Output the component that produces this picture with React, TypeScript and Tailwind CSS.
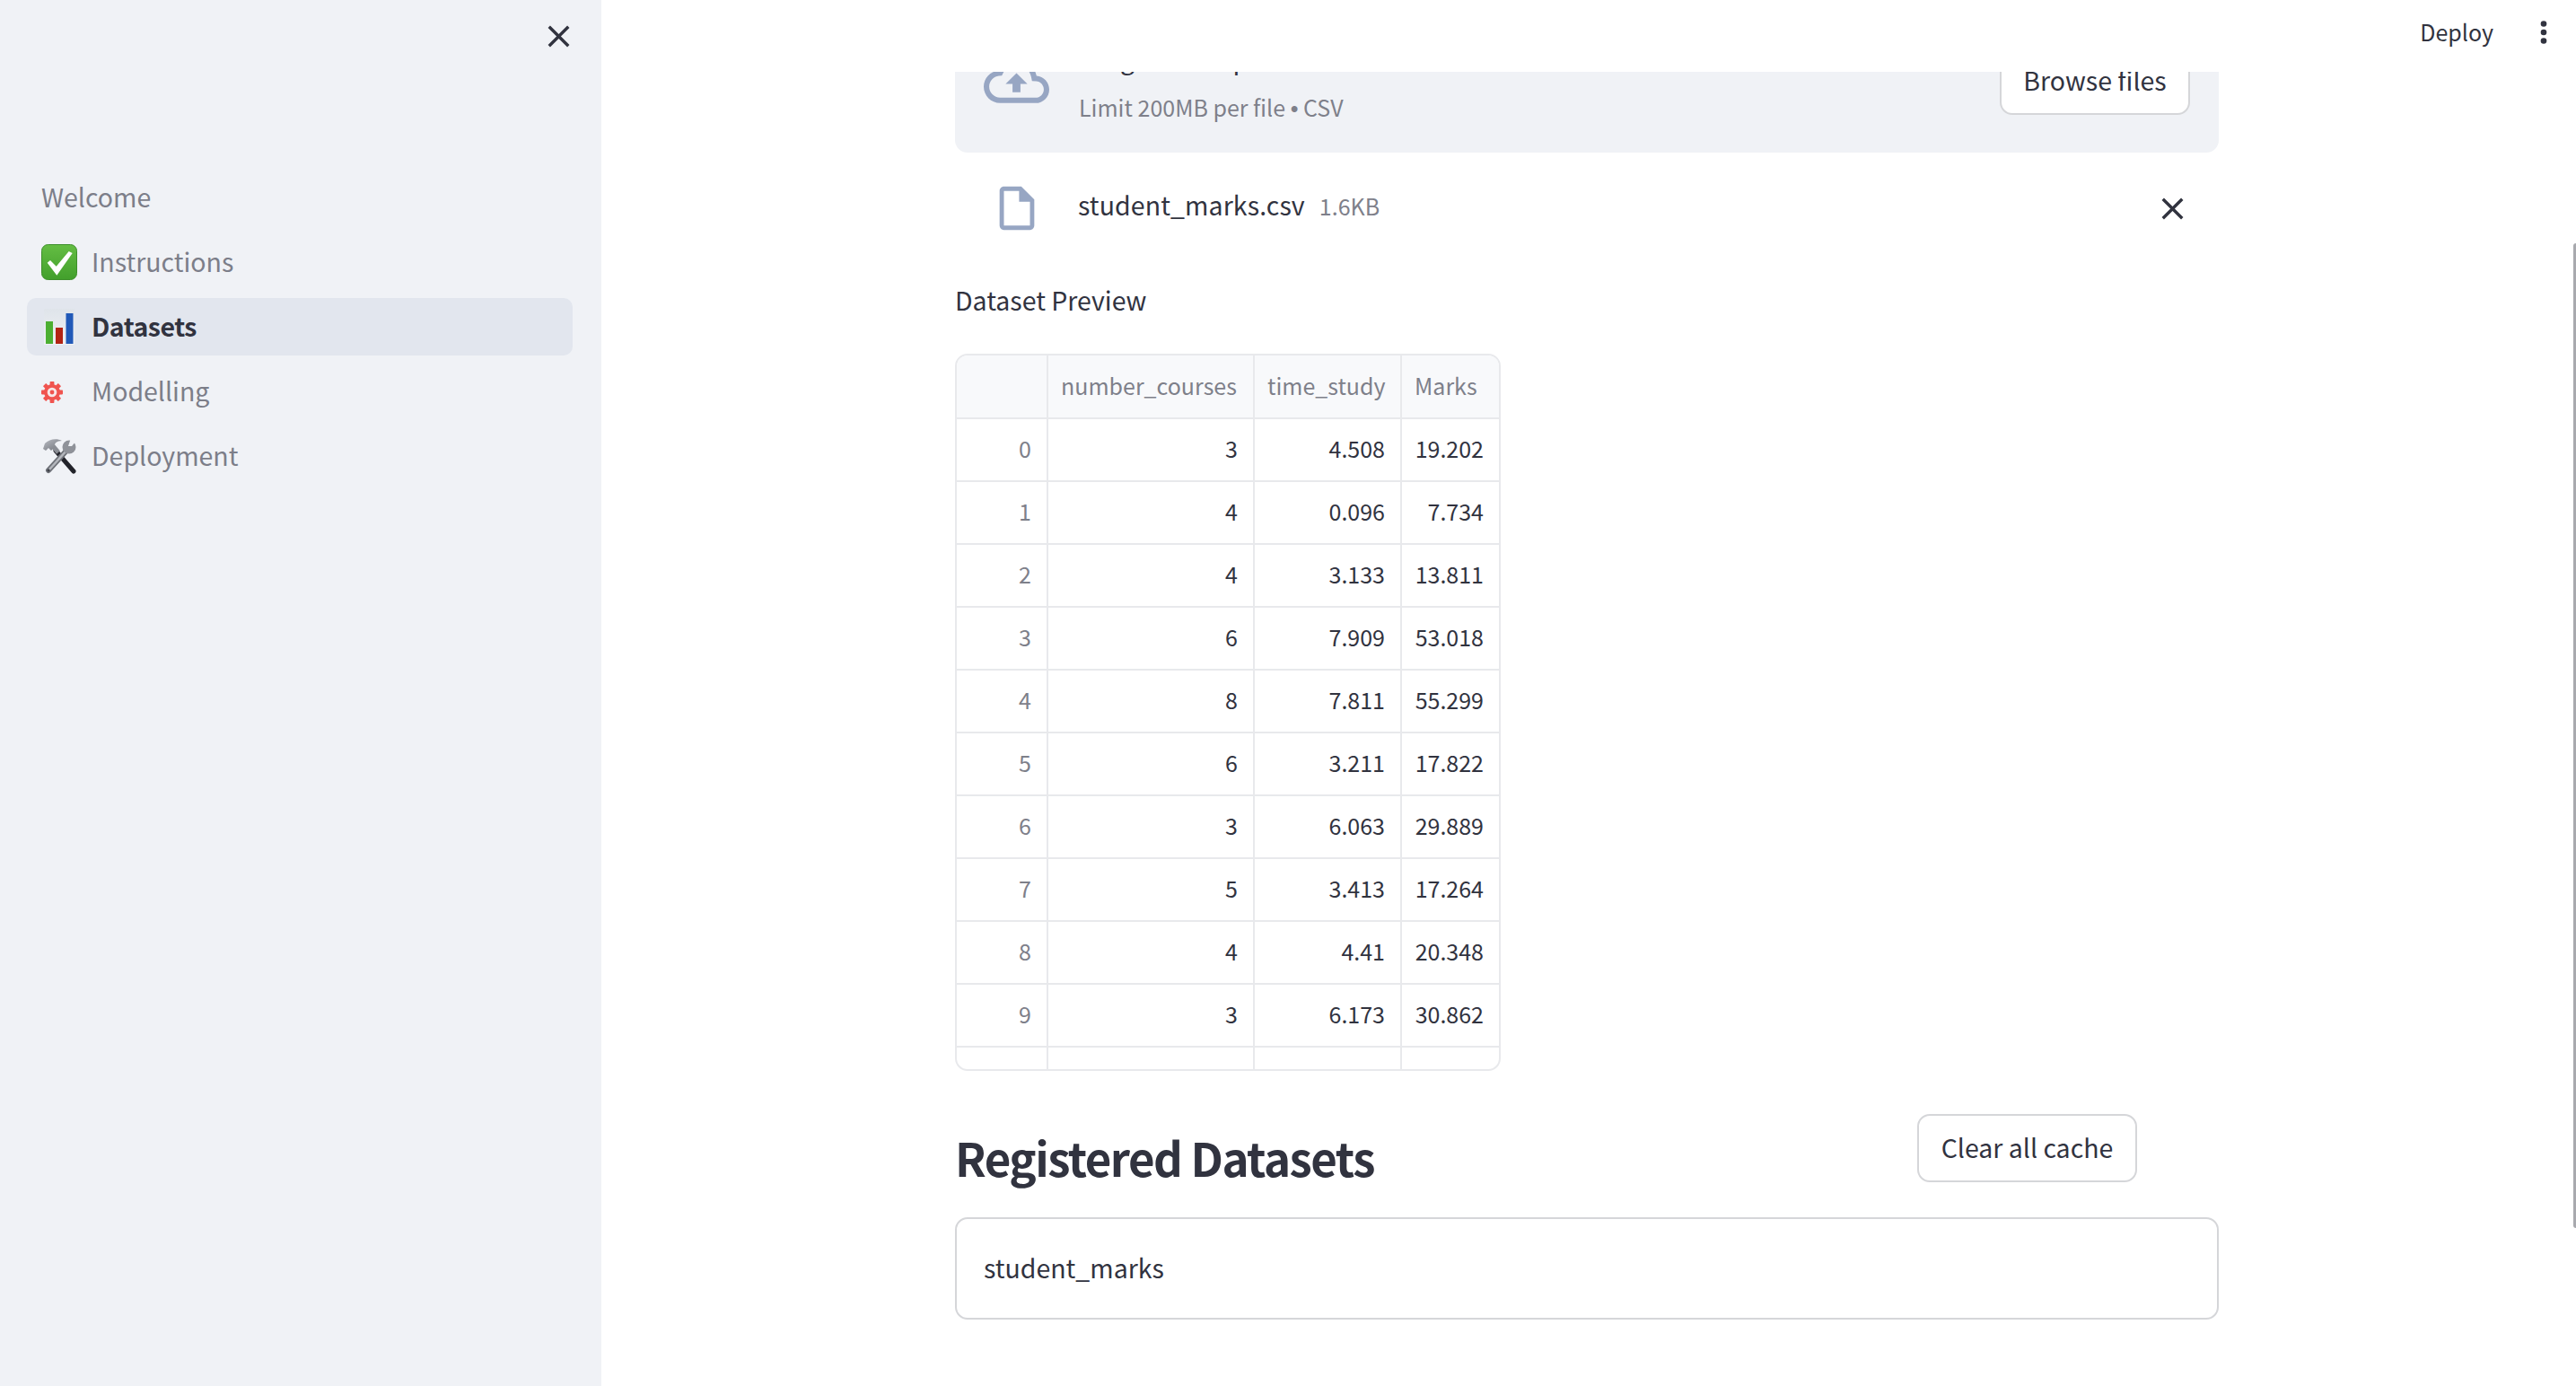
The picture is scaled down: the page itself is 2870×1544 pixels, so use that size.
const rows = [
  ['0', '3', '4.508', '19.202'],
  ['1', '4', '0.096', '7.734'],
  ['2', '4', '3.133', '13.811'],
  ['3', '6', '7.909', '53.018'],
  ['4', '8', '7.811', '55.299'],
  ['5', '6', '3.211', '17.822'],
  ['6', '3', '6.063', '29.889'],
  ['7', '5', '3.413', '17.264'],
  ['8', '4', '4.41', '20.348'],
  ['9', '3', '6.173', '30.862'],
  ['', '', '', ''],
];

function CloseIcon() {
  return (
    <svg viewBox="0 0 24 24" className="w-[41px] h-[41px] fill-[#31333f]">
      <path d="M19 6.41L17.59 5 12 10.59 6.41 5 5 6.41 10.59 12 5 17.59 6.41 19 12 13.41 17.59 19 19 17.59 13.41 12z" />
    </svg>
  );
}

function CheckEmoji() {
  return (
    <svg viewBox="0 0 40 40" className="w-10 h-10">
      <defs>
        <linearGradient id="chk" x1="0" y1="0" x2="0" y2="1">
          <stop offset="0" stopColor="#64bd43" />
          <stop offset="1" stopColor="#429f2c" />
        </linearGradient>
      </defs>
      <rect x="0.5" y="0.5" width="39" height="39" rx="7" fill="url(#chk)" stroke="#3d8f2a" />
      <path d="M6.7 20.7L10 18l6.7 6.7L30.7 8l4 2-17.4 24.7z" fill="#fff" />
    </svg>
  );
}

function ChartEmoji() {
  return (
    <svg viewBox="0 0 34 40" className="w-[34px] h-10">
      <defs>
        <linearGradient id="chartbg" x1="0" y1="0" x2="0" y2="1">
          <stop offset="0" stopColor="#dfe4ea" />
          <stop offset="1" stopColor="#eff1f4" />
        </linearGradient>
      </defs>
      <rect width="34" height="40" fill="url(#chartbg)" />
      <rect x="2" y="14" width="8" height="25" fill="#4caf32" />
      <rect x="13" y="21" width="8" height="18" fill="#b32414" />
      <rect x="24.5" y="5" width="8" height="34" fill="#2159b8" />
    </svg>
  );
}

function GearEmoji() {
  return (
    <svg viewBox="0 0 24 24" className="w-6 h-6 mt-[1px]">
      <g fill="#f0544f">
        <rect x="9.6" y="0" width="4.8" height="24" rx="0.8" />
        <rect x="9.6" y="0" width="4.8" height="24" rx="0.8" transform="rotate(45 12 12)" />
        <rect x="9.6" y="0" width="4.8" height="24" rx="0.8" transform="rotate(90 12 12)" />
        <rect x="9.6" y="0" width="4.8" height="24" rx="0.8" transform="rotate(135 12 12)" />
      </g>
      <circle cx="12" cy="12" r="9" fill="#f0544f" />
      <circle cx="12" cy="12" r="5.3" fill="#f7e6e6" />
      <circle cx="12" cy="12" r="2.4" fill="#f0544f" />
    </svg>
  );
}

function ToolsEmoji() {
  return (
    <svg viewBox="0 0 40 40" className="w-10 h-10">
      <defs>
        <linearGradient id="metal" x1="0" y1="0" x2="1" y2="1">
          <stop offset="0" stopColor="#b8bbc2" />
          <stop offset="1" stopColor="#6f7279" />
        </linearGradient>
      </defs>
      <path d="M16 14l20 23" stroke="#22232a" strokeWidth="5" strokeLinecap="round" />
      <path d="M13 9l6 7" stroke="#8a8d94" strokeWidth="5" />
      <path d="M2 12L4 6C9 1 17 0 23 3 17 3 14 6 15 10l-4 4-3-3-3 3z" fill="url(#metal)" />
      <path d="M29 13L8 36" stroke="#6f7279" strokeWidth="6" strokeLinecap="round" />
      <path d="M28 14L9 35" stroke="#b4b7bd" strokeWidth="2.5" />
      <circle cx="8" cy="36" r="1.5" fill="#3f4147" />
      <circle cx="31" cy="10" r="7.5" fill="#8f9299" />
      <path d="M30 9l3-9h4l2.5 2.5L34 9z" fill="#f0f2f6" />
    </svg>
  );
}

const nav = [
  { label: 'Instructions', icon: <CheckEmoji /> },
  { label: 'Datasets', icon: <ChartEmoji />, active: true },
  { label: 'Modelling', icon: <GearEmoji /> },
  { label: 'Deployment', icon: <ToolsEmoji /> },
];

export default function App() {
  return (
    <div className="flex h-screen overflow-hidden bg-white text-[#31333f] text-[28.5px] font-['Noto_Sans_CJK_SC',sans-serif]">
      <aside className="w-[670px] shrink-0 bg-[#f0f2f6] flex flex-col">
        <div className="h-[183px] flex justify-end pr-[27px] pt-[20px]">
          <div className="h-[41px]">
            <CloseIcon />
          </div>
        </div>
        <div className="pl-[46px] h-[72px] flex items-center leading-none text-[#7c7e89]">Welcome</div>
        <nav className="mt-[5px] px-[30px] flex flex-col gap-[8px]">
          {nav.map((item) => (
            <div
              key={item.label}
              className={
                item.active
                  ? 'h-[64px] w-[608px] rounded-[10px] bg-[#e2e6ee] flex items-center font-semibold tracking-[-0.5px] text-[#31333f]'
                  : 'h-[64px] w-[608px] rounded-[10px] flex items-center text-[#7c7e89]'
              }
            >
              <div className={item.active ? 'w-[72px] pl-[19px] shrink-0' : 'w-[72px] pl-[16px] shrink-0'}>{item.icon}</div>
              <span className="leading-none -mt-[2px]">{item.label}</span>
            </div>
          ))}
        </nav>
      </aside>

      <main className="flex-1 relative flex flex-col overflow-hidden">
        <header className="relative z-10 h-20 shrink-0 bg-white flex items-start justify-end pt-[18px] pr-[32px]">
          <span className="text-[25px] leading-[34px] mr-[52px]">Deploy</span>
          <svg viewBox="0 0 8 26" className="w-2 h-[26px] mt-[5px] fill-[#31333f]">
            <circle cx="4" cy="3.5" r="3.3" />
            <circle cx="4" cy="13" r="3.3" />
            <circle cx="4" cy="22.5" r="3.3" />
          </svg>
        </header>

        <div className="-mt-20 ml-[394px] w-[1408px]">
          <section className="h-[170px] rounded-b-[14px] bg-[#f0f2f6] flex items-start pl-[32px] pr-[33px]">
            <svg viewBox="0 0 24 24" className="w-[73px] h-[73px] mt-[54px] fill-[#97a6c3] shrink-0">
              <path d="M19.35 10.04C18.67 6.59 15.64 4 12 4 9.11 4 6.6 5.64 5.35 8.04 2.34 8.36 0 10.91 0 14c0 3.31 2.69 6 6 6h13c2.76 0 5-2.24 5-5 0-2.64-2.05-4.78-4.65-4.96zM19 18H6c-2.21 0-4-1.79-4-4 0-2.05 1.53-3.76 3.56-3.97l1.07-.11.5-.95C8.08 7.14 9.94 6 12 6c2.62 0 4.88 1.86 5.39 4.43l.3 1.5 1.53.11c1.56.1 2.78 1.41 2.78 2.96 0 1.65-1.35 3-3 3zM8 13h2.55v3h2.9v-3H16l-4-4z" />
            </svg>
            <div className="ml-[33px] flex-1 pt-[47px]">
              <div className="leading-[36px]">Drag and drop file here</div>
              <div className="text-[25px] leading-[34px] mt-[19px] text-[#7e808a]">
                Limit 200MB per file <span className="font-['Liberation_Sans',sans-serif]">•</span> CSV
              </div>
            </div>
            <button className="mt-[50px] w-[212px] -mr-[1px] h-[78px] bg-white border-2 border-[#d5d6d9] rounded-[14px] flex items-center justify-center">
              Browse files
            </button>
          </section>

          <div className="mt-[32px] h-[60px] flex items-center pl-[40px] pr-[31px]">
            <svg viewBox="0 0 24 24" className="w-[58px] h-[58px] fill-[#97a6c3] shrink-0">
              <path d="M14 2H6c-1.1 0-1.99.9-1.99 2L4 20c0 1.1.89 2 1.99 2H18c1.1 0 2-.9 2-2V8l-6-6zM6 20V4h7v5h5v11H6z" />
            </svg>
            <span className="ml-[39px] leading-none tracking-[0.1px] -mt-[8px]">student_marks.csv</span>
            <span className="ml-[16px] text-[25px] leading-none text-[#7e808a] -mt-[6px]">1.6KB</span>
            <div className="ml-auto h-[41px]">
              <CloseIcon />
            </div>
          </div>

          <div className="mt-[52px] h-10 leading-10">Dataset Preview</div>

          <div className="mt-[40px] w-[608px] h-[799px] border-2 border-[#e8e9ec] rounded-[14px] overflow-hidden text-[25px]">
            <div className="grid grid-cols-[102px_230px_164px_108px] h-[71px] border-b-2 border-[#e8e9ec] bg-[#f8f9fb] text-[#7e808a]">
              <div className="border-r-2 border-[#e8e9ec]" />
              <div className="border-r-2 border-[#e8e9ec] pl-[14px] leading-[66px]">number_courses</div>
              <div className="border-r-2 border-[#e8e9ec] pl-[14px] leading-[66px]">time_study</div>
              <div className="pl-[14px] leading-[66px]">Marks</div>
            </div>
            {rows.map((row, i) => (
              <div key={i} className="grid grid-cols-[102px_230px_164px_108px] h-[70px] border-b-2 border-[#e8e9ec] text-right leading-[65px]">
                <div className="border-r-2 border-[#e8e9ec] pr-[17px] text-[#7e808a]">{row[0]}</div>
                <div className="border-r-2 border-[#e8e9ec] pr-[17px]">{row[1]}</div>
                <div className="border-r-2 border-[#e8e9ec] pr-[17px]">{row[2]}</div>
                <div className="pr-[17px]">{row[3]}</div>
              </div>
            ))}
          </div>

          <div className="mt-[48px] flex items-start justify-between pr-[91px]">
            <h2 className="mt-[13px] text-[51px] tracking-[-1.5px] leading-[70px] font-semibold">Registered Datasets</h2>
            <button className="w-[245px] h-[76px] pb-[2px] bg-white border-2 border-[#d5d6d9] rounded-[14px] flex items-center justify-center">
              Clear all cache
            </button>
          </div>

          <div className="mt-[32px] h-[114px] pb-[2px] border-2 border-[#d5d6d9] rounded-[14px] flex items-center pl-[30px]">
            student_marks
          </div>
        </div>

        <div className="absolute right-0 top-[271px] w-[3px] h-[1097px] rounded-l-[3px] bg-[#a8a9ae]" />
      </main>
    </div>
  );
}
